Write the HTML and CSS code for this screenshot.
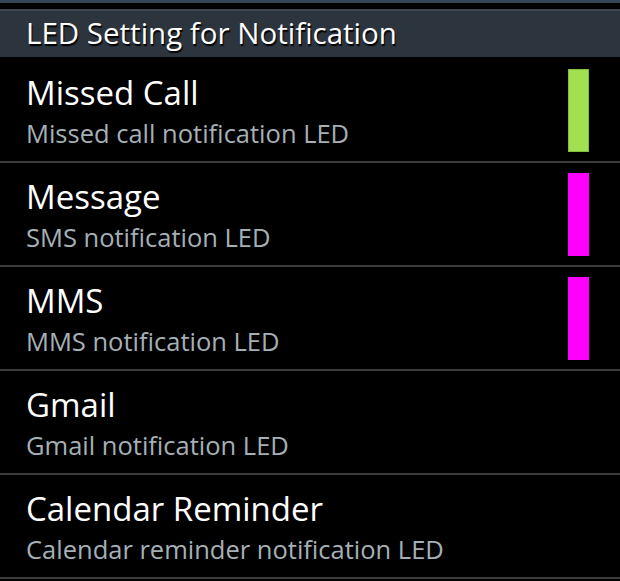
FILE: index.html
```html
<!DOCTYPE html>
<html lang="en">
<head>
    <meta charset="UTF-8">
    <meta name="viewport" content="width=device-width, initial-scale=1.0">
    <title>LED Setting for Notification</title>
    <link rel="stylesheet" href="styles.css">
</head>
<body>
    <div class="status-strip"></div>
    <div class="header">LED Setting for Notification</div>

    <ul class="list">
        <li class="item">
            <div class="text">
                <div class="title">Missed Call</div>
                <div class="summary">Missed call notification LED</div>
            </div>
            <div class="led led-green"></div>
        </li>
        <li class="item">
            <div class="text">
                <div class="title">Message</div>
                <div class="summary">SMS notification LED</div>
            </div>
            <div class="led led-magenta"></div>
        </li>
        <li class="item">
            <div class="text">
                <div class="title">MMS</div>
                <div class="summary">MMS notification LED</div>
            </div>
            <div class="led led-magenta"></div>
        </li>
        <li class="item">
            <div class="text">
                <div class="title">Gmail</div>
                <div class="summary">Gmail notification LED</div>
            </div>
        </li>
        <li class="item">
            <div class="text">
                <div class="title">Calendar Reminder</div>
                <div class="summary">Calendar reminder notification LED</div>
            </div>
        </li>
    </ul>
</body>
</html>
```

FILE: styles.css
```css
body {
    margin: 0;
    background-color: #000;
    color: #fff;
    font-family: "Open Sans", "Noto Sans", sans-serif;
    overflow: hidden;
}
.status-strip {
    height: 3px;
    background-color: #34475a;
    margin-bottom: 6px;
}
.header {
    height: 46px;
    padding-left: 26px;
    background-color: #2c343d;
    border-top: 2px solid #3d4650;
    font-size: 29.5px;
    line-height: 44px;
    text-shadow: 1px 2px 1px #000;
}
.list {
    list-style: none;
    margin: 2px 0 0;
    padding: 0;
}
.item {
    display: flex;
    align-items: center;
    justify-content: space-between;
    height: 102px;
    padding: 0 31px 0 26px;
    border-bottom: 2px solid #3c3c3c;
}
.text {
    padding-top: 6px;
}
.title {
    font-size: 33px;
    line-height: 40px;
}
.summary {
    font-size: 25.5px;
    line-height: 40px;
    color: #a5b0b6;
}
.led {
    width: 21px;
    height: 83px;
}
.led-green {
    background-color: #a2e052;
    border: 1px solid #7cc23a;
    box-sizing: border-box;
}
.led-magenta {
    background-color: #ff00ff;
}
```
